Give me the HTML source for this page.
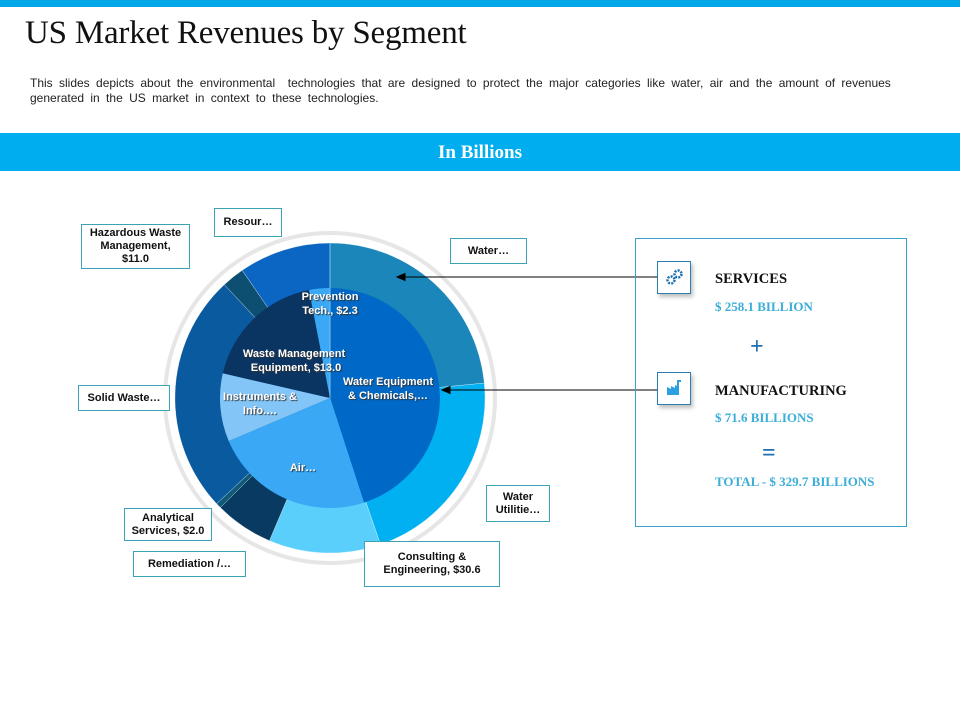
<!DOCTYPE html>
<html><head><meta charset="utf-8"><style>
body{margin:0;width:960px;height:720px;background:#fff;position:relative;overflow:hidden;font-family:"Liberation Sans",Arial,sans-serif}
.top{position:absolute;left:0;top:0;width:960px;height:7px;background:#00a8e8}
h1{position:absolute;left:25px;top:15px;margin:0;font:33px "Liberation Serif",serif;color:#111;letter-spacing:-0.2px}
.desc{position:absolute;left:30px;top:76px;font-size:12px;line-height:15px;color:#222;white-space:nowrap;word-spacing:3px}
.band{position:absolute;left:0;top:133px;width:960px;height:38px;background:#00aeef;color:#fff;font:bold 19px "Liberation Serif",serif;text-align:center;line-height:40px}
.lb{position:absolute;border:1px solid #3aa3b5;background:#fff;font-weight:bold;font-size:11px;color:#111;text-align:center;line-height:13px;display:flex;align-items:center;justify-content:center;box-sizing:border-box}
.panel{position:absolute;left:635px;top:238px;width:272px;height:289px;border:1px solid #3aa0c8;box-sizing:border-box}
.ic{position:absolute;width:34px;height:33px;border:1px solid #2a7fb0;background:#fff;box-shadow:2px 3px 4px rgba(0,0,0,.25);box-sizing:border-box}
.t{position:absolute;font-family:"Liberation Serif",serif;font-weight:bold}
</style></head><body>
<div class="top"></div>
<h1>US Market Revenues by Segment</h1>
<div class="desc">This slides depicts about the environmental&nbsp; technologies that are designed to protect the major categories like water, air and the amount of revenues<br>generated in the US market in context to these technologies.</div>
<div class="band">In Billions</div>
<svg width="960" height="720" style="position:absolute;left:0;top:0">
<circle cx="330" cy="398" r="165" fill="#fff" stroke="#e6e6e6" stroke-width="4"/>
<g stroke="#ffffff" stroke-width="0.3">
<path d="M330 398L330 243A155 155 0 0 1 484.3 383.1Z" fill="#1a86b9"/>
<path d="M330 398L484.3 383.1A155 155 0 0 1 380.5 544.6Z" fill="#00b0f0"/>
<path d="M330 398L380.5 544.6A155 155 0 0 1 269.4 540.7Z" fill="#5bcffb"/>
<path d="M330 398L269.4 540.7A155 155 0 0 1 220.4 507.6Z" fill="#083a62"/>
<path d="M330 398L220.4 507.6A155 155 0 0 1 216.6 503.7Z" fill="#0e5a78"/>
<path d="M330 398L216.6 503.7A155 155 0 0 1 224.3 284.6Z" fill="#0a5aa0"/>
<path d="M330 398L224.3 284.6A155 155 0 0 1 242.2 270.3Z" fill="#0c4f70"/>
<path d="M330 398L242.2 270.3A155 155 0 0 1 330 243Z" fill="#0a66c2"/>
</g>
<path d="M330 398L330 288A110 110 0 0 1 364 502.6Z" fill="#0068c6"/>
<path d="M330 398L364 502.6A110 110 0 0 1 228.7 441Z" fill="#3aa8f5"/>
<path d="M330 398L228.7 441A110 110 0 0 1 222.8 373.3Z" fill="#82c5f6"/>
<path d="M330 398L222.8 373.3A110 110 0 0 1 309 290Z" fill="#0a3562"/>
<path d="M330 398L309 290A110 110 0 0 1 330 288Z" fill="#3aa8f5"/>
<line x1="330" y1="243" x2="330" y2="398" stroke="#7fc0e8" stroke-width="1"/>
<g font-family="Liberation Sans,Arial" font-weight="bold" font-size="11" fill="#fff" text-anchor="middle" style="text-shadow:1px 1px 1px #333">
<text x="330" y="300">Prevention</text><text x="330" y="314">Tech., $2.3</text>
<text x="294" y="357">Waste Management</text><text x="296" y="371">Equipment,  $13.0</text>
<text x="388" y="385">Water Equipment</text><text x="388" y="399">&amp; Chemicals,…</text>
<text x="260" y="400">Instruments &amp;</text><text x="260" y="414">Info.…</text>
<text x="303" y="471">Air…</text>
</g>
<g stroke="#000" stroke-width="1" fill="#000">
<line x1="657" y1="277" x2="402" y2="277"/><path d="M397 277L405 273.5L405 280.5Z"/>
<line x1="657" y1="390" x2="447" y2="390"/><path d="M442 390L450 386.5L450 393.5Z"/>
</g>
</svg>
<div class="lb" style="left:81px;top:224px;width:109px;height:45px">Hazardous Waste<br>Management,<br>$11.0</div>
<div class="lb" style="left:214px;top:208px;width:68px;height:29px">Resour…</div>
<div class="lb" style="left:450px;top:238px;width:77px;height:26px">Water…</div>
<div class="lb" style="left:78px;top:385px;width:92px;height:26px">Solid Waste…</div>
<div class="lb" style="left:486px;top:485px;width:64px;height:37px">Water<br>Utilitie…</div>
<div class="lb" style="left:124px;top:508px;width:88px;height:33px">Analytical<br>Services, $2.0</div>
<div class="lb" style="left:133px;top:551px;width:113px;height:26px">Remediation /…</div>
<div class="lb" style="left:364px;top:541px;width:136px;height:46px">Consulting &amp;<br>Engineering, $30.6</div>
<div class="panel"></div>
<div class="ic" style="left:657px;top:261px"><svg width="32" height="31"><circle cx="13" cy="18" r="3.5" fill="none" stroke="#1e6fb0" stroke-width="2.5" stroke-dasharray="2 1.2"/><circle cx="20" cy="12" r="3.5" fill="none" stroke="#1e6fb0" stroke-width="2.5" stroke-dasharray="2 1.2"/></svg></div>
<div class="ic" style="left:657px;top:372px"><svg width="32" height="31"><path d="M9 22V14L13 16V13L17 15V12L21 14V22Z" fill="#2aa0e0"/><rect x="19" y="8" width="2" height="6" fill="#2aa0e0"/><path d="M19 7h4v2h-4z" fill="#2aa0e0"/></svg></div>
<div class="t" style="left:715px;top:271px;font-size:14.5px;color:#111">SERVICES</div>
<div class="t" style="left:715px;top:299px;font-size:13px;color:#3aaed8">$ 258.1 BILLION</div>
<div class="t" style="left:750px;top:334px;font-size:24px;color:#1e6fb0">+</div>
<div class="t" style="left:715px;top:383px;font-size:14.5px;color:#111">MANUFACTURING</div>
<div class="t" style="left:715px;top:410px;font-size:13px;color:#3aaed8">$ 71.6 BILLIONS</div>
<div class="t" style="left:762px;top:440px;font-size:24px;color:#1e6fb0">=</div>
<div class="t" style="left:715px;top:474px;font-size:13px;color:#3aaed8">TOTAL  - $ 329.7 BILLIONS</div>
</body></html>
